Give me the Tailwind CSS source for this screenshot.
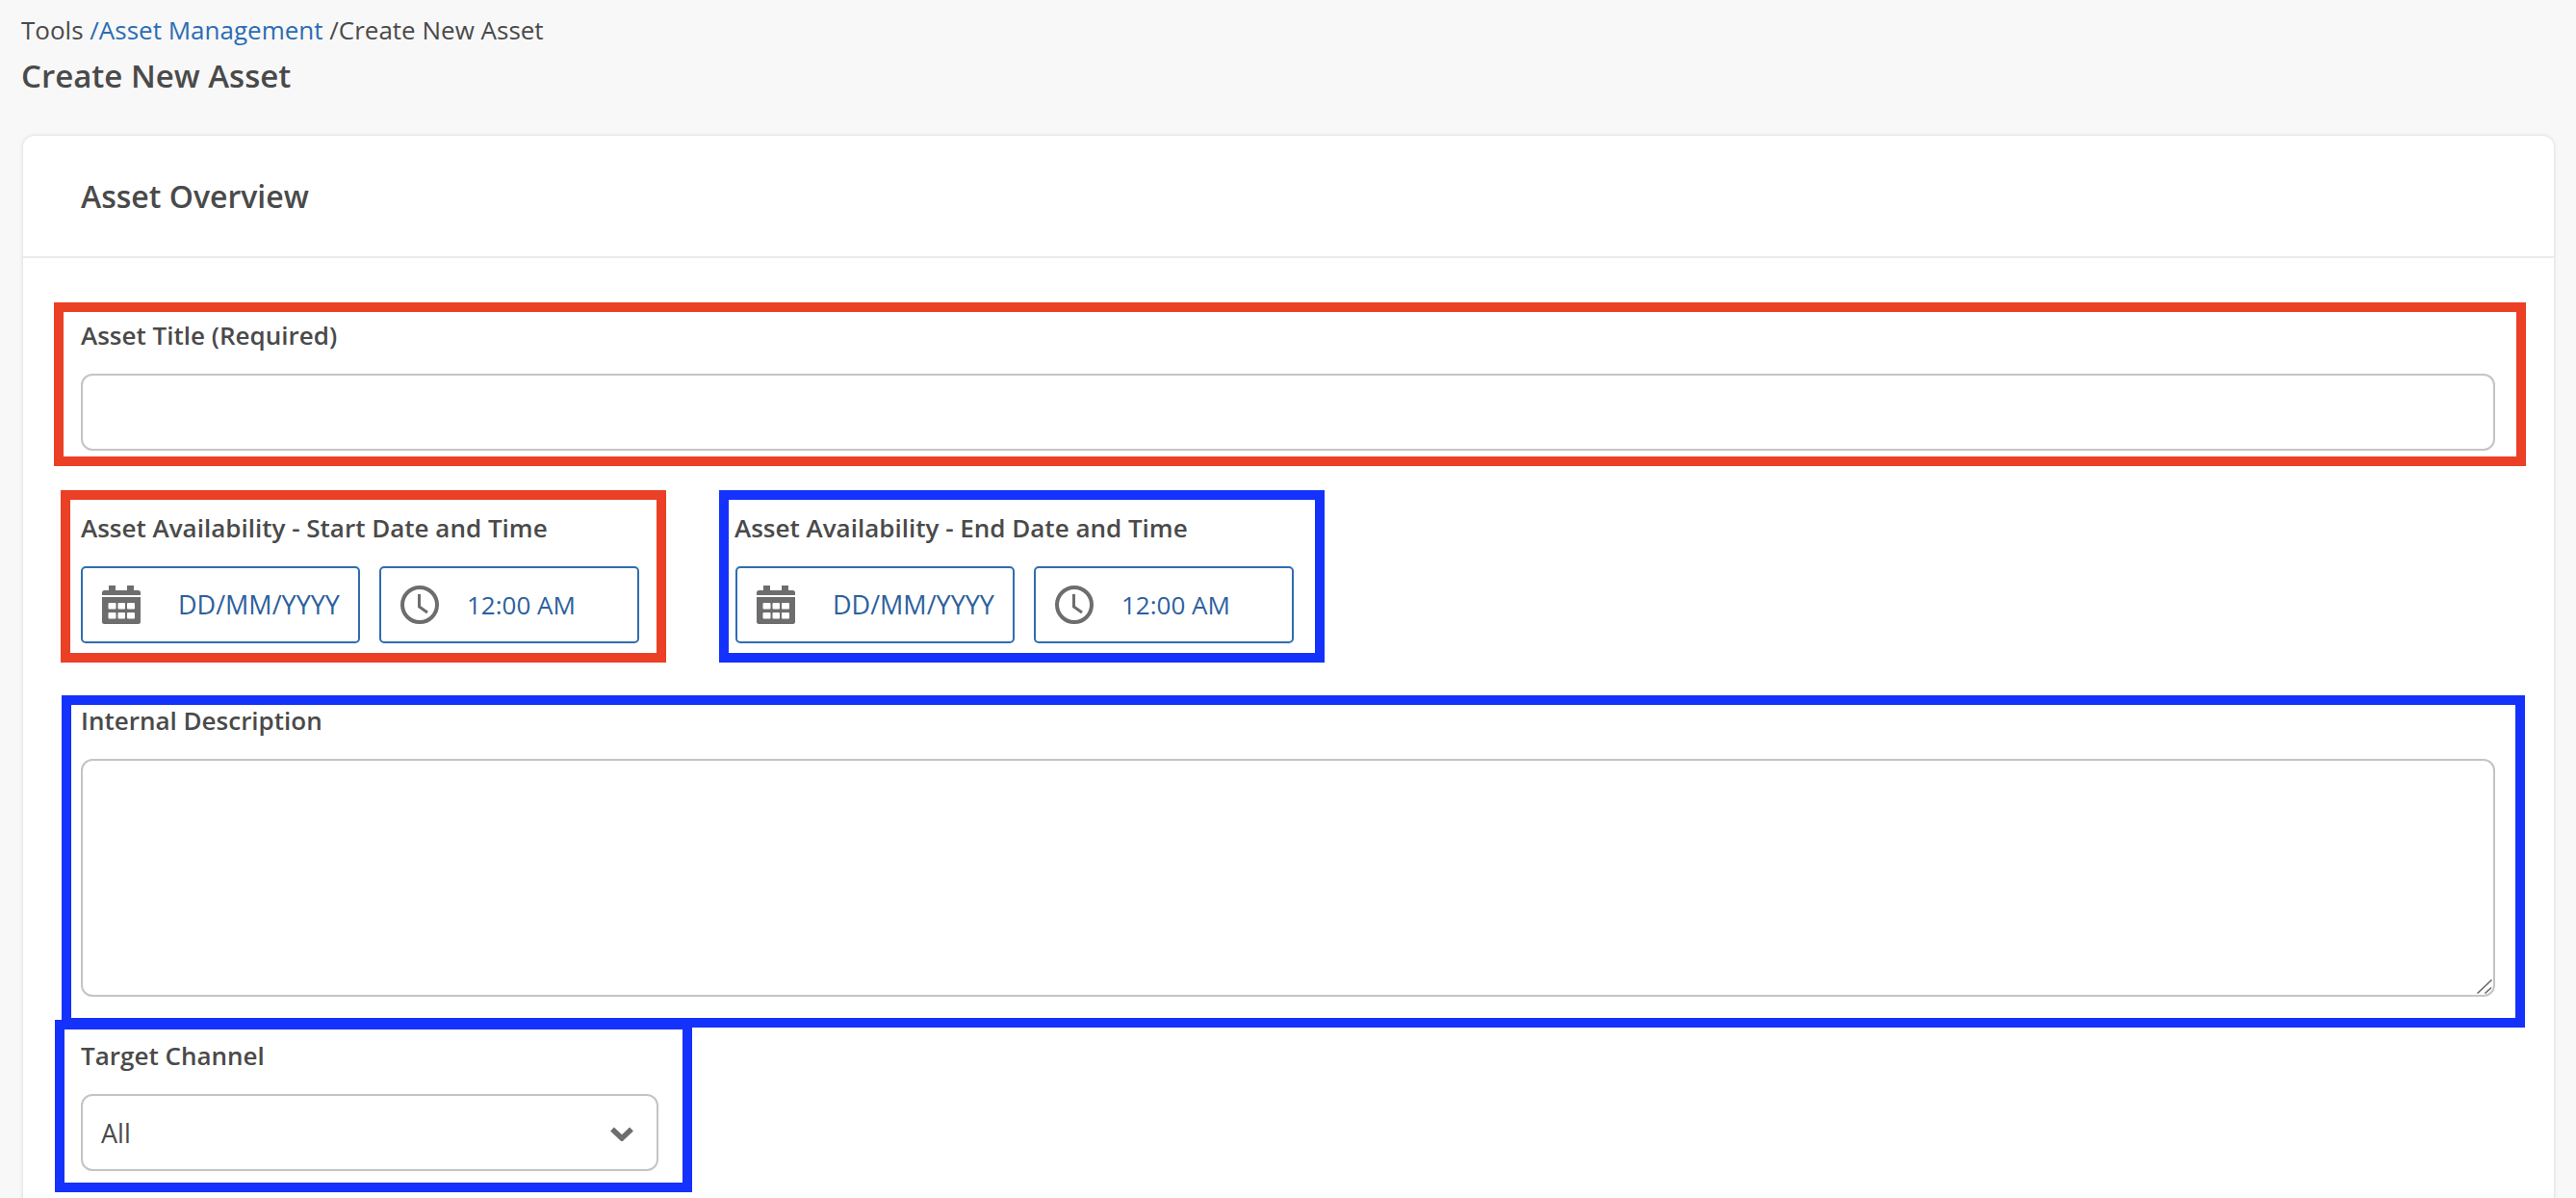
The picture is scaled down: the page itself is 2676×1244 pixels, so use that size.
<!doctype html>
<html lang="en">
<head>
<meta charset="utf-8">
<title>Create New Asset</title>
<script src="https://cdn.jsdelivr.net/npm/@tailwindcss/browser@4"></script>
</head>
<body class="bg-[#f8f8f8] font-['Open_Sans',sans-serif] text-[#4a4a4a] h-[1244px] overflow-hidden">
<div class="relative h-[1244px] overflow-hidden">
  <main class="px-[22px] pt-[16px]">
    <nav class="h-[30px] text-[26px] leading-[30px] whitespace-nowrap">Tools <a class="text-[#2b6cb5]">/Asset Management</a> /Create New Asset</nav>
    <h1 class="mt-[13px] h-[40px] text-[33px] leading-[40px] font-semibold">Create New Asset</h1>
    <section class="mt-[42px] ml-[2px] w-[2629px] h-[1200px] bg-white rounded-[12px] shadow-[0_0_4px_rgba(0,0,0,0.15)]">
      <header class="h-[127px] px-[60px] pt-[43px] border-b-2 border-[#ebebeb]">
        <h2 class="text-[32px] leading-[40px] font-semibold">Asset Overview</h2>
      </header>
      <form class="px-[60px]">
        <label class="block mt-[62px] text-[26px] leading-[36px] font-semibold">Asset Title (Required)</label>
        <input type="text" class="block mt-[22px] w-[2508px] h-[80px] bg-white border-2 border-[#c4c4c4] rounded-[12px]">
        <div class="flex gap-[100px] mt-[62px]">
          <div class="w-[580px]">
            <div class="text-[26px] leading-[36px] font-semibold whitespace-nowrap">Asset Availability - Start Date and Time</div>
            <div class="flex gap-[20px] mt-[22px]">
              <button type="button" class="flex items-center w-[290px] h-[80px] pl-[20px] border-2 border-[#2f6db0] rounded-[5px] text-[#2d5f9e] text-[27px] font-medium">
                <svg class="w-[40px] h-[40px] shrink-0" viewBox="0 0 40 40" fill="#6d6d6d"><path d="M7 0h7v5h12V0h7v5h4.500A2.500 2.500 0 0 1 40 7.500V10H0V7.500A2.500 2.500 0 0 1 2.500 5H7zM0 12h40v25.500a2.500 2.500 0 0 1-2.500 2.500h-35A2.500 2.500 0 0 1 0 37.500z"/><g fill="#fff"><rect x="6.500" y="18" width="8" height="6.500" rx="1"/><rect x="16.500" y="18" width="7.500" height="6.500" rx="1"/><rect x="26" y="18" width="8" height="6.500" rx="1"/><rect x="6.500" y="28" width="8" height="6.500" rx="1"/><rect x="16.500" y="28" width="7.500" height="6.500" rx="1"/><rect x="26" y="28" width="8" height="6.500" rx="1"/></g></svg>
                <span class="ml-[39px]">DD/MM/YYYY</span>
              </button>
              <button type="button" class="flex items-center w-[270px] h-[80px] pl-[20px] border-2 border-[#2f6db0] rounded-[5px] text-[#2d5f9e] text-[26px] font-medium">
                <svg class="w-[40px] h-[40px] shrink-0" viewBox="0 0 40 40" fill="none" stroke="#6d6d6d"><circle cx="20" cy="20" r="18" stroke-width="4"/><path stroke-width="3" d="M19.500 9v13l8.500 6"/></svg>
                <span class="ml-[29px]">12:00 AM</span>
              </button>
            </div>
          </div>
          <div class="w-[580px]">
            <div class="text-[26px] leading-[36px] font-semibold whitespace-nowrap ml-[-1px]">Asset Availability - End Date and Time</div>
            <div class="flex gap-[20px] mt-[22px]">
              <button type="button" class="flex items-center w-[290px] h-[80px] pl-[20px] border-2 border-[#2f6db0] rounded-[5px] text-[#2d5f9e] text-[27px] font-medium">
                <svg class="w-[40px] h-[40px] shrink-0" viewBox="0 0 40 40" fill="#6d6d6d"><path d="M7 0h7v5h12V0h7v5h4.500A2.500 2.500 0 0 1 40 7.500V10H0V7.500A2.500 2.500 0 0 1 2.500 5H7zM0 12h40v25.500a2.500 2.500 0 0 1-2.500 2.500h-35A2.500 2.500 0 0 1 0 37.500z"/><g fill="#fff"><rect x="6.500" y="18" width="8" height="6.500" rx="1"/><rect x="16.500" y="18" width="7.500" height="6.500" rx="1"/><rect x="26" y="18" width="8" height="6.500" rx="1"/><rect x="6.500" y="28" width="8" height="6.500" rx="1"/><rect x="16.500" y="28" width="7.500" height="6.500" rx="1"/><rect x="26" y="28" width="8" height="6.500" rx="1"/></g></svg>
                <span class="ml-[39px]">DD/MM/YYYY</span>
              </button>
              <button type="button" class="flex items-center w-[270px] h-[80px] pl-[20px] border-2 border-[#2f6db0] rounded-[5px] text-[#2d5f9e] text-[26px] font-medium">
                <svg class="w-[40px] h-[40px] shrink-0" viewBox="0 0 40 40" fill="none" stroke="#6d6d6d"><circle cx="20" cy="20" r="18" stroke-width="4"/><path stroke-width="3" d="M19.500 9v13l8.500 6"/></svg>
                <span class="ml-[29px]">12:00 AM</span>
              </button>
            </div>
          </div>
        </div>
        <label class="block mt-[62px] text-[26px] leading-[36px] font-semibold">Internal Description</label>
        <div class="relative mt-[22px] w-[2508px] h-[247px]">
          <textarea class="block w-full h-full resize-none bg-white border-2 border-[#c4c4c4] rounded-[12px]"></textarea>
          <svg class="absolute right-[3px] bottom-[3px] w-[16px] h-[15px]" viewBox="0 0 16 15" fill="none" stroke="#666" stroke-width="1.500"><path d="M0.500 14.500L15.500 0.500M8.500 14.500L15 8.500"/></svg>
        </div>
        <label class="block mt-[43px] text-[26px] leading-[36px] font-semibold">Target Channel</label>
        <div class="relative mt-[22px] w-[600px] h-[80px]">
          <select class="block w-full h-full appearance-none bg-white border-2 border-[#c4c4c4] rounded-[12px] pl-[19px] pt-[2px] text-[27px] text-[#4a4a4a]"><option>All</option></select>
          <svg class="absolute right-[26px] top-[34px] w-[24px] h-[15px]" viewBox="0 0 24 15" fill="none" stroke="#6d6d6d" stroke-width="5.500"><path d="M2 2.500l10 9.500 10-9.500"/></svg>
        </div>
      </form>
    </section>
  </main>

  <!-- annotation rectangles drawn over the page -->
  <div class="absolute left-[56px] top-[314px] w-[2568px] h-[170px] border-[10px] border-[#eb4026]"></div>
  <div class="absolute left-[63px] top-[509px] w-[629px] h-[179px] border-[10px] border-[#eb4026]"></div>
  <div class="absolute left-[747px] top-[509px] w-[629px] h-[179px] border-[10px] border-[#1432fb]"></div>
  <div class="absolute left-[64px] top-[722px] w-[2559px] h-[345px] border-[10px] border-[#1432fb]"></div>
  <div class="absolute left-[57px] top-[1059px] w-[662px] h-[179px] border-[10px] border-[#1432fb]"></div>
</div>
</body>
</html>
